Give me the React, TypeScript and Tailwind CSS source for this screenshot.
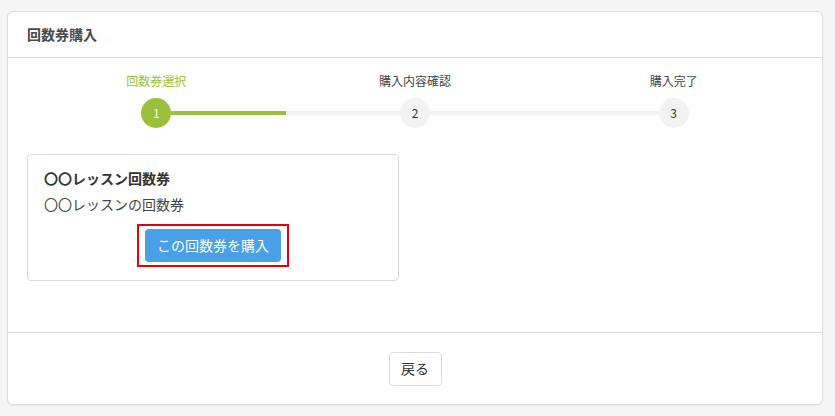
import React from "react";

const font = { fontFamily: '"Noto Sans CJK JP", "Noto Sans", sans-serif' };

function Step({ label, num, active, left, right }: { label: string; num: number; active: boolean; left: "none" | "gray" | "green"; right: "none" | "gray" | "green" }) {
  const seg = (k: "none" | "gray" | "green") =>
    k === "none" ? "bg-transparent" : k === "green" ? "bg-[#9bbf3a]" : "bg-[#f2f2f2]";
  return (
    <div className="flex flex-col items-center">
      <div className={`text-[12px] leading-[18px] ${active ? "text-[#9bbf3a]" : "text-[#444]"}`}>{label}</div>
      <div className="mt-[8px] flex w-full items-center">
        <div className={`h-[4px] flex-1 ${seg(left)}`} />
        <div
          className={`flex h-[30px] w-[30px] items-center justify-center rounded-full text-[12px] ${
            active ? "bg-[#9bbf3a] text-white" : "bg-[#f2f2f2] text-[#333]"
          }`}
        >
          {num}
        </div>
        <div className={`h-[4px] flex-1 ${seg(right)}`} />
      </div>
    </div>
  );
}

export default function App() {
  return (
    <div className="min-h-[416px] w-full bg-[#f5f5f5] px-[7px] pt-[11px]" style={font}>
      <div className="w-[816px] rounded-[6px] border border-[#dcdcdc] bg-white shadow-[0_1px_2px_rgba(0,0,0,0.05)]">
        <div className="flex h-[46px] items-center border-b border-[#dcdcdc] px-[19px] text-[14px] font-bold text-[#4a4a4a]">
          回数券購入
        </div>
        <div className="h-[274px] px-[19px] pt-[14px]">
          <div className="grid grid-cols-3">
            <Step label="回数券選択" num={1} active left="none" right="green" />
            <Step label="購入内容確認" num={2} active={false} left="gray" right="gray" />
            <Step label="購入完了" num={3} active={false} left="gray" right="none" />
          </div>
          <div className="mt-[26px] w-[372px] rounded-[4px] border border-[#dcdcdc] px-[16px] pb-[13px] pt-[12px]">
            <div className="text-[14px] font-bold leading-[22px] text-[#333]">〇〇レッスン回数券</div>
            <div className="mt-[4px] text-[14px] leading-[22px] text-[#444]">〇〇レッスンの回数券</div>
            <div className="mt-[9px] flex justify-center">
              <div className="border-2 border-[#e60012] px-[6px] py-[3px]">
                <button className="flex h-[33px] w-[136px] items-center justify-center rounded-[4px] bg-[#49a0e6] text-[14px] text-white">
                  この回数券を購入
                </button>
              </div>
            </div>
          </div>
        </div>
        <div className="flex h-[72px] items-center justify-center border-t border-[#dcdcdc]">
          <button className="flex h-[34px] w-[53px] items-center justify-center rounded-[4px] border border-[#dcdcdc] bg-white text-[14px] text-[#333]">
            戻る
          </button>
        </div>
      </div>
    </div>
  );
}
